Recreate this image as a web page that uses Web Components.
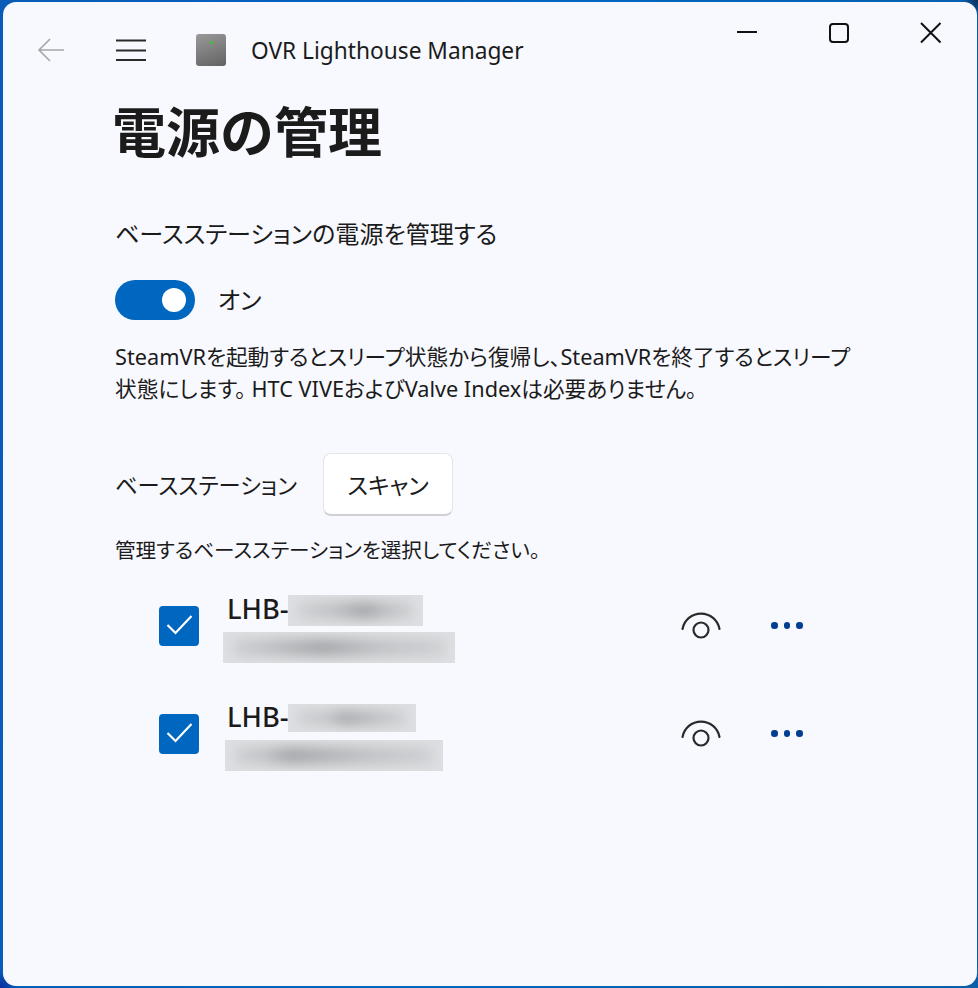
<!DOCTYPE html>
<html lang="ja">
<head>
<meta charset="utf-8">
<title>OVR Lighthouse Manager</title>
<style>
  html, body { margin: 0; height: 100%; background: #0067c0; overflow: hidden; }
  body { font-family: "Noto Sans", "Noto Sans CJK JP", sans-serif; color: #1b1b1b; }
</style>
</head>
<body>
<app-window>
  <title-bar></title-bar>
  <page-header>電源の管理</page-header>
  <power-section></power-section>
  <station-header></station-header>
  <device-row top="28" info="2" text="1" w1="135" h1="31" w2="232" x2="-4" gap2="6" peak1="58%" peak2="42%"></device-row>
  <device-row top="40" info="3" text="0" w1="128" h1="28" w2="218" x2="-2" gap2="8" peak1="42%" peak2="28%"></device-row>
</app-window>

<script>
class AppWindow extends HTMLElement {
  constructor() {
    super();
    const root = this.attachShadow({mode: 'open'});
    root.innerHTML = `
      <style>
        :host {
          display: block;
          box-sizing: border-box;
          height: 100%;
          padding: 2px 1px 2px 3px;
          background:
            radial-gradient(circle at 100% 0, #0b2f57 0, transparent 16px),
            radial-gradient(circle at 0 100%, #0a2c9c 0, transparent 18px),
            linear-gradient(100deg, #0a5bb8 0%, #0067c0 50%, #0b5ea8 100%);
        }
        .inner {
          height: 100%;
          background: #f8f9fe;
          border-radius: 13px;
          overflow: hidden;
          font-feature-settings: "palt";
        }
      </style>
      <div class="inner"><slot></slot></div>
    `;
  }
}

class TitleBar extends HTMLElement {
  constructor() {
    super();
    const root = this.attachShadow({mode: 'open'});
    root.innerHTML = `
      <style>
        :host { display: flex; align-items: flex-start; height: 100px; }
        .back { margin: 33px 0 0 34px; width: 28px; height: 28px; }
        .menu { margin: 36px 0 0 50px; width: 32px; height: 24px; }
        .logo {
          margin: 32px 0 0 49px; width: 30px; height: 32px; border-radius: 3px;
          background: linear-gradient(160deg, #9a9a9a, #626262);
          position: relative;
        }
        .logo::after {
          content: ""; position: absolute; left: 14px; top: 7px;
          width: 3px; height: 3px; border-radius: 50%; background: #2fd02f;
        }
        .name { margin: 32px 0 0 25px; font-size: 22.700px; line-height: 34px; color: #1b1b1b; }
        .caps { margin-left: auto; display: flex; padding: 20px 35px 0 0; }
        .caps svg { display: block; }
      </style>
      <svg class="back" viewBox="0 0 28 28" fill="none" stroke="#a4a6a9" stroke-width="1.6">
        <path d="M2 15 H27 M13 4 L2 15 L13 26"/>
      </svg>
      <svg class="menu" viewBox="0 0 32 24" fill="none" stroke="#2a2a2a" stroke-width="2">
        <path d="M1 2.500 H31 M1 12.500 H31 M1 22 H31"/>
      </svg>
      <div class="logo"></div>
      <div class="name">OVR Lighthouse Manager</div>
      <div class="caps">
        <svg width="91" height="24" viewBox="0 0 91 24" fill="none" stroke="#111" stroke-width="2"><path d="M0 10 H20"/></svg>
        <svg width="92" height="24" viewBox="0 0 92 24" fill="none" stroke="#111" stroke-width="2"><rect x="2" y="2" width="18" height="18" rx="3"/></svg>
        <svg width="22" height="24" viewBox="0 0 22 24" fill="none" stroke="#111" stroke-width="2"><path d="M1 1 L20.500 20.500 M20.500 1 L1 20.500"/></svg>
      </div>
    `;
  }
}

class PageHeader extends HTMLElement {
  constructor() {
    super();
    const root = this.attachShadow({mode: 'open'});
    root.innerHTML = `
      <style>
        :host {
          display: block; padding-left: 109px; font-size: 54px; font-weight: 700;
          line-height: 60px; color: #1b1b1b; font-feature-settings: normal;
        }
      </style>
      <slot></slot>
    `;
  }
}

class ToggleSwitch extends HTMLElement {
  constructor() {
    super();
    const root = this.attachShadow({mode: 'open'});
    root.innerHTML = `
      <style>
        :host { display: flex; align-items: center; gap: 23px; font-size: 24px; line-height: 40px; }
        .track {
          width: 80px; height: 40px; border-radius: 20px; background: #0067c0;
          display: flex; align-items: center; justify-content: flex-end;
          padding-right: 9px; box-sizing: border-box;
        }
        .knob { width: 24px; height: 24px; border-radius: 50%; background: #fff; }
      </style>
      <div class="track"><div class="knob"></div></div>
      <slot></slot>
    `;
  }
}

class PowerSection extends HTMLElement {
  constructor() {
    super();
    const root = this.attachShadow({mode: 'open'});
    root.innerHTML = `
      <style>
        :host { display: block; padding: 55px 0 0 112px; }
        .sub { font-size: 24.100px; line-height: 34px; }
        toggle-switch { margin-top: 29px; }
        .desc { margin-top: 21px; width: 745px; font-size: 21.700px; line-height: 32px; }
      </style>
      <div class="sub">ベースステーションの電源を管理する</div>
      <toggle-switch>オン</toggle-switch>
      <div class="desc">SteamVRを起動するとスリープ状態から復帰し、SteamVRを終了するとスリープ状態にします。 HTC VIVEおよびValve Indexは必要ありません。</div>
    `;
  }
}

class StationHeader extends HTMLElement {
  constructor() {
    super();
    const root = this.attachShadow({mode: 'open'});
    root.innerHTML = `
      <style>
        :host { display: block; padding: 48px 0 0 112px; }
        .row { display: flex; align-items: center; gap: 26px; font-size: 22.250px; }
        button {
          width: 130px; height: 63px; box-sizing: border-box;
          font: inherit; font-size: 23px; color: #1b1b1b; font-feature-settings: "palt";
          background: #fff; border: 1px solid #e6e6e8; border-bottom: 2px solid #d0d0d2; border-radius: 8px;
          padding: 0;
        }
        .hint { margin-top: 19px; font-size: 20.600px; line-height: 30px; }
      </style>
      <div class="row"><span>ベースステーション</span><button>スキャン</button></div>
      <div class="hint">管理するベースステーションを選択してください。</div>
    `;
  }
}

class DeviceRow extends HTMLElement {
  connectedCallback() {
    const a = n => this.getAttribute(n);
    const root = this.attachShadow({mode: 'open'});
    root.innerHTML = `
      <style>
        :host { display: flex; align-items: flex-start; padding: ${a('top')}px 0 0 156px; height: 68px; }
        .check {
          width: 40px; height: 40px; margin-top: 13px; border-radius: 4px; background: #0067c0;
          flex: none;
        }
        .check svg { display: block; }
        .info { margin: ${a('info')}px 0 0 28px; width: 451px; flex: none; }
        .name { display: flex; align-items: flex-start; font-size: 27.300px; font-weight: 500; }
        .name span { line-height: 26px; margin-top: ${a('text')}px; }
        .blur { overflow: hidden; background: #dedfe2; position: relative; }
        .blur i {
          position: absolute; inset: 7px 10px; filter: blur(6px);
          background: linear-gradient(90deg, #cfd0d3, #c2c3c6 var(--peak-before), #a6a7aa var(--peak), #c2c3c6 var(--peak-after), #cfd0d3);
        }
        .b1 { width: ${a('w1')}px; height: ${a('h1')}px; margin-left: -1px; --peak: ${a('peak1')}; --peak-before: 30%; --peak-after: 80%; }
        .b2 { width: ${a('w2')}px; height: 31px; margin: ${a('gap2')}px 0 0 ${a('x2')}px; --peak: ${a('peak2')}; --peak-before: 15%; --peak-after: 70%; }
        .eye { flex: none; margin: 19px 0 0 3px; }
        .dots { flex: none; margin: 29px 0 0 50px; display: flex; gap: 6px; }
        .dots b { width: 6.500px; height: 6.500px; border-radius: 50%; background: #003e92; }
      </style>
      <div class="check">
        <svg width="40" height="40" viewBox="0 0 40 40" fill="none" stroke="#fff" stroke-width="2.200">
          <path d="M8.500 19 L16.500 27 L32.500 10"/>
        </svg>
      </div>
      <div class="info">
        <div class="name"><span>LHB-</span><div class="blur b1"><i></i></div></div>
        <div class="blur b2"><i></i></div>
      </div>
      <svg class="eye" width="40" height="30" viewBox="0 0 40 30" fill="none" stroke="#2a2a2a" stroke-width="2.200" stroke-linecap="round">
        <path d="M1.500 17 A18.800 18.800 0 0 1 38.500 17"/>
        <circle cx="20" cy="18" r="7.500"/>
      </svg>
      <div class="dots"><b></b><b></b><b></b></div>
    `;
  }
}

window.customElements.define('app-window', AppWindow);
window.customElements.define('title-bar', TitleBar);
window.customElements.define('page-header', PageHeader);
window.customElements.define('toggle-switch', ToggleSwitch);
window.customElements.define('power-section', PowerSection);
window.customElements.define('station-header', StationHeader);
window.customElements.define('device-row', DeviceRow);
</script>
</body>
</html>
